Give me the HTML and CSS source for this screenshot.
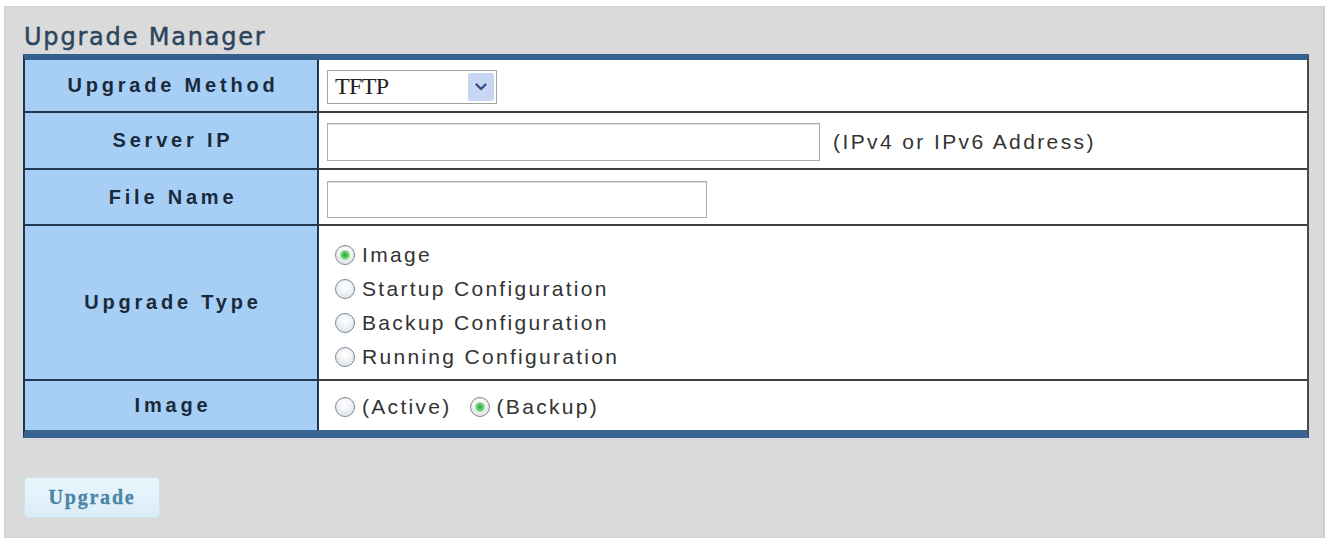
FILE: index.html
```html
<!DOCTYPE html>
<html>
<head>
<meta charset="utf-8">
<link rel="stylesheet" href="styles.css">
</head>
<body>
<div class="panel">
  <h1 class="title">Upgrade Manager</h1>
  <div class="form-table">
    <div class="row r1">
      <div class="label">Upgrade Method</div>
      <div class="value">
        <div class="select">
          <span class="select-text">TFTP</span>
          <span class="select-arrow">
            <svg width="12" height="8" viewBox="0 0 12 8"><path d="M1.5 1.5 L6 6 L10.5 1.5" fill="none" stroke="#3a4c86" stroke-width="2.4" stroke-linecap="round" stroke-linejoin="round"/></svg>
          </span>
        </div>
      </div>
    </div>
    <div class="row r2">
      <div class="label">Server IP</div>
      <div class="value">
        <div class="input wide"></div>
        <span class="hint">(IPv4 or IPv6 Address)</span>
      </div>
    </div>
    <div class="row r3">
      <div class="label">File Name</div>
      <div class="value">
        <div class="input narrow"></div>
      </div>
    </div>
    <div class="row r4">
      <div class="label">Upgrade Type</div>
      <div class="value">
        <div class="radio-list">
          <div class="opt"><span class="radio checked"></span><span class="opt-text">Image</span></div>
          <div class="opt"><span class="radio"></span><span class="opt-text">Startup Configuration</span></div>
          <div class="opt"><span class="radio"></span><span class="opt-text">Backup Configuration</span></div>
          <div class="opt"><span class="radio"></span><span class="opt-text">Running Configuration</span></div>
        </div>
      </div>
    </div>
    <div class="row r5 last">
      <div class="label">Image</div>
      <div class="value">
        <div class="radio-inline">
          <div class="opt"><span class="radio"></span><span class="opt-text">(Active)</span></div>
          <div class="opt second"><span class="radio checked"></span><span class="opt-text">(Backup)</span></div>
        </div>
      </div>
    </div>
  </div>
  <div class="actions">
    <button class="btn">Upgrade</button>
  </div>
</div>
</body>
</html>
```

FILE: styles.css
```css
* { box-sizing: border-box; }
html, body { margin: 0; padding: 0; background: #ffffff; }
body { width: 1332px; height: 543px; overflow: hidden; font-family: "Liberation Sans", Arial, sans-serif; }

.panel {
  margin: 6px 0 0 4px;
  width: 1321px;
  height: 532px;
  background: #dadada;
  border: 1px solid #d2d2d2;
  border-right: 2px solid #cfcfcf;
  padding: 15px 0 0 18px;
}

.title {
  margin: 0 0 2px 1px;
  height: 30px;
  line-height: 30px;
  font-size: 24px;
  font-weight: normal;
  letter-spacing: 1.8px;
  color: #2a445d;
  -webkit-text-stroke: 0.45px #2a445d;
  font-family: "DejaVu Sans", "Liberation Sans", sans-serif;
}

.form-table {
  width: 1286px;
  border-top: 6px solid #35618f;
  border-bottom: 8px solid #3a6491;
  border-left: 2px solid #1e3550;
  border-right: 2px solid #4a4a4a;
  box-shadow: inset 0 -1px 0 #a9d4f2;
}

.row { display: flex; }
.r1 { height: 53px; }
.r2 { height: 57px; }
.r3 { height: 56px; }
.r4 { height: 155px; }
.r5 { height: 49px; }

.label {
  width: 294px;
  flex: none;
  background: #a7cff6;
  border-right: 2px solid #1e3550;
  border-bottom: 2px solid #22384f;
  display: flex;
  align-items: center;
  justify-content: center;
  font-weight: bold;
  font-size: 20px;
  letter-spacing: 3.8px;
  padding-left: 4px;
  color: #1b2a3b;
}

.value {
  flex: 1;
  background: #ffffff;
  border-bottom: 2px solid #3e3e3e;
  display: flex;
  align-items: center;
  padding-left: 8px;
}

.last .label, .last .value { border-bottom: none; }

.select {
  width: 170px;
  height: 34px;
  border: 1px solid #a3a3a3;
  background: #fff;
  display: flex;
  align-items: center;
  justify-content: space-between;
  padding: 0 2px 0 7px;
  margin-top: 2px;
}
.select-text {
  font-family: "Liberation Serif", "Times New Roman", serif;
  font-size: 24px;
  letter-spacing: -0.6px;
  color: #222;
}
.select-arrow {
  width: 26px;
  height: 28px;
  background: #c6d6f3;
  border-radius: 2px;
  display: flex;
  align-items: center;
  justify-content: center;
}

.input {
  height: 38px;
  border: 1px solid #a9aeb3;
  box-shadow: inset 0 1px 0 #dde2e6;
  background: #fff;
  margin-top: 2px;
}
.input.wide { width: 493px; }
.input.narrow { width: 380px; height: 37px; margin-top: 4px; }

.hint {
  margin-left: 13px;
  font-size: 21px;
  letter-spacing: 2.4px;
  color: #333;
  margin-top: 2px;
}

.radio-list {
  display: flex;
  flex-direction: column;
  margin-top: 6px;
  margin-left: 8px;
}
.radio-inline {
  display: flex;
  margin-left: 8px;
  margin-top: 3px;
}

.opt {
  display: flex;
  align-items: center;
  height: 34px;
}
.opt.second { margin-left: 18px; }

.opt-text {
  margin-left: 7px;
  font-size: 21px;
  letter-spacing: 2.3px;
  color: #333;
}

.radio {
  width: 20px;
  height: 20px;
  border-radius: 50%;
  border: 1px solid #7d8893;
  background: radial-gradient(circle at 50% 35%, #ffffff 0, #f1f3f5 45%, #cfd5db 100%);
  box-shadow: inset 0 0 0 1px #e9edf0;
  flex: none;
}
.radio.checked {
  background:
    radial-gradient(circle at 50% 50%, #2fa33a 0, #4fc457 2.5px, #9fe0a2 4.5px, rgba(255,255,255,0) 5.5px),
    radial-gradient(circle at 50% 35%, #ffffff 0, #f1f3f5 45%, #cfd5db 100%);
}

.actions { margin-top: 39px; padding-left: 1px; }

.btn {
  width: 136px;
  height: 41px;
  background: linear-gradient(#e9f6fd, #dcedf8);
  border: 1px solid #cde2ef;
  border-radius: 4px;
  font-family: "Liberation Serif", "Times New Roman", serif;
  font-weight: bold;
  font-size: 20px;
  letter-spacing: 1.8px;
  color: #4b85a6;
  -webkit-text-stroke: 0.3px #4b85a6;
  padding: 0;
}
```
